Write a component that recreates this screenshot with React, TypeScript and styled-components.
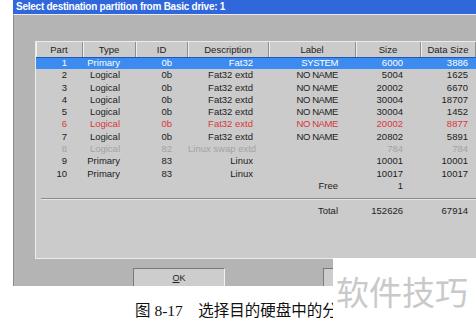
import styled, { createGlobalStyle } from "styled-components";

const GlobalStyle = createGlobalStyle`
  html, body {
    margin: 0;
    padding: 0;
    background: #fff;
  }
  body {
    width: 476px;
    height: 329px;
    overflow: hidden;
    font-family: "Liberation Sans", Arial, sans-serif;
  }
`;

type Tone = "normal" | "selected" | "warn" | "muted";

interface Col {
  title: string;
  width: number;
  pad: number;
}

const cols: Col[] = [
  { title: "Part", width: 47, pad: 16 },
  { title: "Type", width: 53, pad: 16 },
  { title: "ID", width: 52, pad: 16 },
  { title: "Description", width: 81, pad: 16 },
  { title: "Label", width: 87, pad: 18 },
  { title: "Size", width: 65, pad: 18 },
  { title: "Data Size", width: 55, pad: 8 },
];

const gridCols = cols.map((c) => `${c.width}px`).join(" ") + " 1fr";

const rows: { cells: string[]; tone: Tone }[] = [
  { cells: ["1", "Primary", "0b", "Fat32", "SYSTEM", "6000", "3886"], tone: "selected" },
  { cells: ["2", "Logical", "0b", "Fat32 extd", "NO NAME", "5004", "1625"], tone: "normal" },
  { cells: ["3", "Logical", "0b", "Fat32 extd", "NO NAME", "20002", "6670"], tone: "normal" },
  { cells: ["4", "Logical", "0b", "Fat32 extd", "NO NAME", "30004", "18707"], tone: "normal" },
  { cells: ["5", "Logical", "0b", "Fat32 extd", "NO NAME", "30004", "1452"], tone: "normal" },
  { cells: ["6", "Logical", "0b", "Fat32 extd", "NO NAME", "20002", "8877"], tone: "warn" },
  { cells: ["7", "Logical", "0b", "Fat32 extd", "NO NAME", "20802", "5891"], tone: "normal" },
  { cells: ["8", "Logical", "82", "Linux swap extd", "", "784", "784"], tone: "muted" },
  { cells: ["9", "Primary", "83", "Linux", "", "10001", "10001"], tone: "normal" },
  { cells: ["10", "Primary", "83", "Linux", "", "10017", "10017"], tone: "normal" },
  { cells: ["", "", "", "", "Free", "1", ""], tone: "normal" },
];

const toneColor: Record<Tone, string> = {
  normal: "#1c1c1c",
  selected: "#ffffff",
  warn: "#d9383a",
  muted: "#a3a3a3",
};

const Page = styled.div`
  position: relative;
  width: 476px;
  height: 329px;
  overflow: hidden;
  background: #fff;
`;

const Dialog = styled.div`
  margin-left: 13px;
  width: 463px;
  display: flex;
  flex-direction: column;
`;

const TitleBar = styled.div`
  height: 14px;
  background: #3068dc;
  color: #fff;
  font: bold 10px "Liberation Sans", Arial, sans-serif;
  letter-spacing: -0.25px;
  line-height: 14px;
  padding-left: 3px;
  white-space: nowrap;
`;

const DialogBody = styled.div`
  height: 272px;
  box-sizing: border-box;
  border-top: 1px solid #ececec;
  border-left: 1px solid #8c8c8c;
  background: #b4b4b4;
  padding: 26px 0 0 21px;
  overflow: hidden;
  display: flex;
  flex-direction: column;
  gap: 9px;
`;

const Panel = styled.div`
  flex: none;
  width: 460px;
  height: 218px;
  box-sizing: border-box;
  border: 1px solid #ececec;
  background: #cbcbcb;
  font-size: 9.5px;
  color: #1c1c1c;
`;

const HeaderRow = styled.div`
  display: grid;
  grid-template-columns: ${gridCols};
  height: 15px;
`;

const HeaderCell = styled.div`
  border-right: 1px solid #8e8e8e;
  box-shadow: inset 1px 0 #efefef;
  text-align: center;
  line-height: 15px;
  white-space: nowrap;
`;

const Row = styled.div<{ $tone: Tone }>`
  display: grid;
  grid-template-columns: ${gridCols};
  height: 12.3px;
  line-height: 12.3px;
  color: ${(p) => toneColor[p.$tone]};
  background: ${(p) => (p.$tone === "selected" ? "#3b8bf1" : "transparent")};
  box-shadow: ${(p) => (p.$tone === "selected" ? "inset 0 1px #1f58b8" : "none")};
`;

const Cell = styled.div<{ $pad: number; $caps?: boolean }>`
  text-align: right;
  padding-right: ${(p) => p.$pad}px;
  white-space: pre;
  letter-spacing: ${(p) => (p.$caps ? "-0.4px" : "0")};
`;

const Rule = styled.div`
  margin: 5.5px 0 0 5px;
  height: 1px;
  background: #8a8a8a;
  border-bottom: 1px solid #e6e6e6;
`;

const TotalRow = styled(Row)`
  margin-top: 5.5px;
`;

const ButtonRow = styled.div`
  display: flex;
  gap: 98px;
  padding-left: 98px;
`;

const Button = styled.div`
  flex: none;
  width: 92px;
  height: 22px;
  box-sizing: border-box;
  border: 1px solid;
  border-color: #7a7a7a #f2f2f2 #f2f2f2 #7a7a7a;
  background: #cdcdcd;
  font-size: 9px;
  line-height: 10px;
  padding-top: 4px;
  text-align: center;
  color: #222;
`;

const Caption = styled.div`
  height: 43px;
  box-sizing: border-box;
  padding: 15px 0 0 135px;
  font: 15.5px "Liberation Serif", "Noto Sans CJK SC", serif;
  line-height: 20px;
  white-space: pre;
  color: #111;
`;

const Watermark = styled.div`
  position: absolute;
  left: 333px;
  top: 258px;
  width: 143px;
  height: 71px;
  box-sizing: border-box;
  background: #fff;
  padding: 17px 0 0 3px;
  font: 33px "Noto Sans CJK SC", sans-serif;
  line-height: 33px;
  color: #c9c9c9;
  white-space: nowrap;
`;

function DataRow({ cells, tone }: { cells: string[]; tone: Tone }) {
  return (
    <Row $tone={tone}>
      {cells.map((text, i) => (
        <Cell key={i} $pad={cols[i].pad} $caps={i === 4 && text !== "Free"}>
          {text}
        </Cell>
      ))}
    </Row>
  );
}

export default function App() {
  return (
    <Page>
      <GlobalStyle />
      <Dialog>
        <TitleBar>Select destination partition from Basic drive: 1</TitleBar>
        <DialogBody>
          <Panel>
            <HeaderRow>
              {cols.map((c) => (
                <HeaderCell key={c.title}>{c.title}</HeaderCell>
              ))}
            </HeaderRow>
            {rows.map((r, i) => (
              <DataRow key={i} cells={r.cells} tone={r.tone} />
            ))}
            <Rule />
            <TotalRow $tone="normal">
              {["", "", "", "", "Total", "152626", "67914"].map((text, i) => (
                <Cell key={i} $pad={cols[i].pad}>
                  {text}
                </Cell>
              ))}
            </TotalRow>
          </Panel>
          <ButtonRow>
            <Button>
              <u>O</u>K
            </Button>
            <Button />
          </ButtonRow>
        </DialogBody>
      </Dialog>
      <Caption>{"图 8-17\u3000选择目的硬盘中的分"}</Caption>
      <Watermark>软件技巧</Watermark>
    </Page>
  );
}
